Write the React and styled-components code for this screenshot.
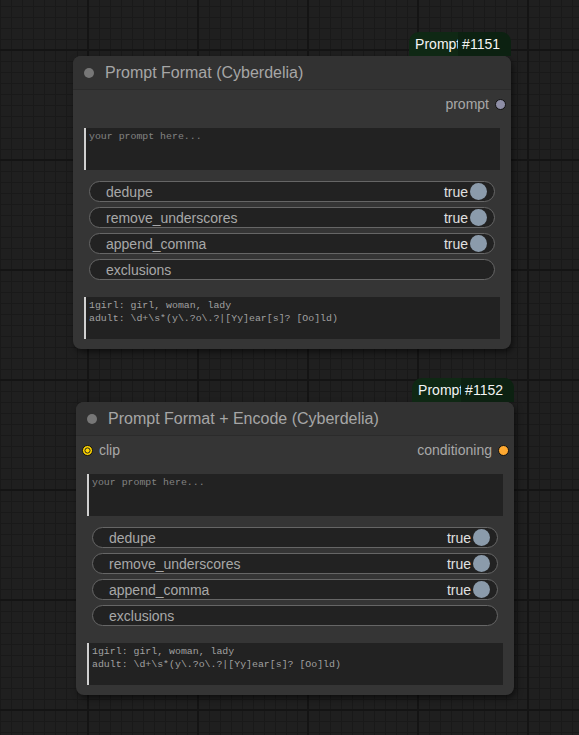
import React from "react";
import styled, { createGlobalStyle } from "styled-components";

const GlobalStyle = createGlobalStyle`
  * {
    box-sizing: border-box;
    margin: 0;
    padding: 0;
  }
  body {
    background: #1e1e1e;
    font-family: "Liberation Sans", Arial, sans-serif;
  }
`;

const nodes = [
  {
    id: 1151,
    title: "Prompt Format (Cyberdelia)",
    x: 73,
    y: 56,
    inputs: [],
    outputs: [{ name: "prompt", color: "#8e8ea6" }],
  },
  {
    id: 1152,
    title: "Prompt Format + Encode (Cyberdelia)",
    x: 76,
    y: 402,
    inputs: [{ name: "clip", color: "#ffd500" }],
    outputs: [{ name: "conditioning", color: "#ffa931" }],
  },
];

const toggles = ["dedupe", "remove_underscores", "append_comma"];

function Slot({ color, ring }) {
  return (
    <svg width="11" height="11" viewBox="0 0 11 11">
      <circle cx="5.5" cy="5.5" r="5" fill={color} stroke="#111" strokeWidth="1" />
      {ring && <circle cx="5.5" cy="5.5" r="2.6" fill="none" stroke="#222" strokeWidth="1" />}
    </svg>
  );
}

function Node({ node }) {
  return (
    <NodeBox style={{ left: node.x, top: node.y }}>
      <Badge>
        <BadgeName>Prompt</BadgeName>
        <BadgeId>#{node.id}</BadgeId>
      </Badge>
      <Title>
        <TitleDot />
        {node.title}
      </Title>
      <Body>
        <SlotRow>
          <SlotSide>
            {node.inputs.map((s) => (
              <SlotLabel key={s.name}>
                <Slot color={s.color} ring />
                {s.name}
              </SlotLabel>
            ))}
          </SlotSide>
          <SlotSide $right>
            {node.outputs.map((s) => (
              <SlotLabel key={s.name}>
                {s.name}
                <Slot color={s.color} />
              </SlotLabel>
            ))}
          </SlotSide>
        </SlotRow>
        <TextArea $placeholder>your prompt here...</TextArea>
        <Widgets>
          {toggles.map((t) => (
            <Pill key={t}>
              <span>{t}</span>
              <Value>
                true
                <Knob />
              </Value>
            </Pill>
          ))}
          <Pill>
            <span>exclusions</span>
          </Pill>
        </Widgets>
        <TextArea>
          1girl: girl, woman, lady
          <br />
          {"adult: \\d+\\s*(y\\.?o\\.?|[Yy]ear[s]? [Oo]ld)"}
        </TextArea>
      </Body>
    </NodeBox>
  );
}

export default function App() {
  return (
    <>
      <GlobalStyle />
      <Canvas>
        {nodes.map((n) => (
          <Node key={n.id} node={n} />
        ))}
      </Canvas>
    </>
  );
}

const Canvas = styled.div`
  position: relative;
  width: 579px;
  height: 735px;
  overflow: hidden;
  background-color: #1f1f1f;
  background-image:
    linear-gradient(to right, #141414 2px, transparent 2px),
    linear-gradient(to bottom, #141414 2px, transparent 2px),
    linear-gradient(to right, #191919 1px, transparent 1px),
    linear-gradient(to bottom, #191919 1px, transparent 1px);
  background-size: 110px 110px, 110px 110px, 11px 11px, 11px 11px;
  background-position: 87px 0, 0 49px, 0 0, 0 6px;
`;

const NodeBox = styled.div`
  position: absolute;
  width: 438px;
  height: 293px;
  background: #353535;
  border-radius: 8px;
  box-shadow: 2px 3px 6px rgba(0, 0, 0, 0.55);
  display: flex;
  flex-direction: column;
`;

const Badge = styled.div`
  position: absolute;
  right: 0;
  bottom: 100%;
  height: 24px;
  display: flex;
  align-items: center;
  background: #0f2814;
  border-radius: 10px 10px 0 0;
  color: #f4f4f4;
  font-size: 14px;
  overflow: hidden;
`;

const BadgeName = styled.span`
  width: 49px;
  padding-left: 6px;
  overflow: hidden;
  white-space: nowrap;
`;

const BadgeId = styled.span`
  height: 100%;
  display: flex;
  align-items: center;
  padding: 0 11px 0 4px;
  background: #0c2111;
`;

const Title = styled.div`
  height: 34px;
  display: flex;
  align-items: center;
  gap: 11px;
  padding-left: 11px;
  background: #323232;
  border-radius: 8px 8px 0 0;
  border-bottom: 1px solid #2b2b2b;
  color: #a6a6a6;
  font-size: 16px;
`;

const TitleDot = styled.span`
  width: 10px;
  height: 10px;
  border-radius: 50%;
  background: #777;
`;

const Body = styled.div`
  flex: 1;
  display: flex;
  flex-direction: column;
  padding: 4px 11px 10px;
`;

const SlotRow = styled.div`
  height: 20px;
  display: flex;
  justify-content: space-between;
  align-items: center;
  margin-bottom: 14px;
`;

const SlotSide = styled.div`
  display: flex;
  align-items: center;
  margin-right: ${(p) => (p.$right ? "-6px" : "0")};
  margin-left: ${(p) => (p.$right ? "0" : "-5px")};
`;

const SlotLabel = styled.div`
  display: flex;
  align-items: center;
  gap: 6px;
  color: #a8a8a8;
  font-size: 14px;
`;

const TextArea = styled.div`
  height: 42px;
  background: #222;
  border-left: 2px solid #d0d0d0;
  padding: 2px 3px;
  font-family: "Liberation Mono", "DejaVu Sans Mono", monospace;
  font-size: 9.9px;
  line-height: 13px;
  color: ${(p) => (p.$placeholder ? "#828282" : "#a0a0a0")};
  white-space: nowrap;
`;

const Widgets = styled.div`
  display: flex;
  flex-direction: column;
  gap: 5px;
  padding: 11px 5px 17px;
`;

const Pill = styled.div`
  height: 21px;
  display: flex;
  align-items: center;
  justify-content: space-between;
  padding: 0 7px 0 16px;
  background: #222;
  border: 1px solid #666;
  border-radius: 11px;
  color: #a8a8a8;
  font-size: 14px;
`;

const Value = styled.span`
  display: flex;
  align-items: center;
  gap: 2px;
  color: #e0e0e0;
`;

const Knob = styled.span`
  width: 17px;
  height: 17px;
  border-radius: 50%;
  background: #8b9bab;
`;
